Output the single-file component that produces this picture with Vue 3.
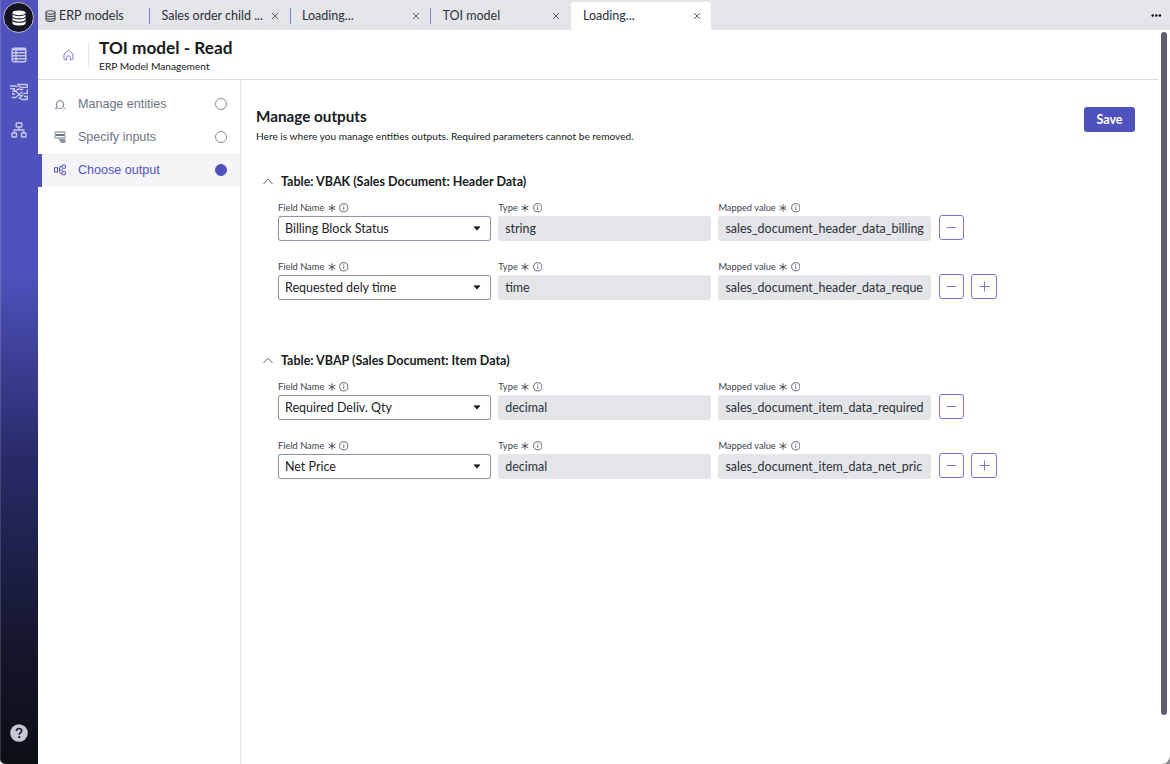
<template>
  <div class="app">
    <nav class="rail">
      <div class="rail-logo">
        <svg width="16" height="18" viewBox="0 0 16 18">
          <path d="M1.5 3.8v10.4c0 1.3 2.9 2.3 6.5 2.3s6.5-1 6.5-2.3V3.8z" fill="#fff" />
          <ellipse cx="8" cy="3.8" rx="6.5" ry="2.4" fill="#fff" />
          <path d="M1.5 4.8c1.8 2.5 11.2 2.5 13 0M1.5 8c1.8 2.5 11.2 2.5 13 0M1.5 11.4c1.8 2.5 11.2 2.5 13 0" fill="none" stroke="#151423" stroke-width="1.1" />
        </svg>
      </div>
      <svg class="rail-icon table-icon" viewBox="0 0 16 16">
        <rect x="1.2" y="1.2" width="13.6" height="13.6" rx="1.5" />
        <path d="M1.5 2.7h13M5 3v11.5M1.5 5.7h13M1.5 8.7h13M1.5 11.7h13" />
      </svg>
      <svg class="rail-icon map-icon" viewBox="0 0 18 18">
        <path d="M0 3h5.500l1.500 1M0 5.700h5M2 8.300h3.500M2 11h3M7 1.500h10.300v2.800H11L8 2.800M3 5.700l8 7.300M5.500 8.300l3-2.300 2.500.5 2.300-.2M2 14.500h3.500l5-4 2-1.700M17.300 6.300v4h-4M17.300 12.500v4h-5l-3-1.500 4-3.500M14 13.500h3" />
      </svg>
      <svg class="rail-icon tree-icon" viewBox="0 0 16 16">
        <rect x="5.2" y="1" width="5.6" height="4" rx="0.5" />
        <rect x="1" y="11" width="4.5" height="4" rx="0.5" />
        <rect x="10.5" y="11" width="4.5" height="4" rx="0.5" />
        <path d="M8 5v3M3.200 11V8h9.600v3" />
      </svg>
      <div class="help">
        <svg width="18" height="18" viewBox="0 0 18 18">
          <circle cx="9" cy="9" r="8.8" fill="#c7c9d2" />
          <path d="M6.400 7c0-3.300 5.300-3.300 5.300-.3 0 2-2.500 2-2.500 4" fill="none" stroke="#171a32" stroke-width="1.6" />
          <circle cx="9.2" cy="13.2" r="1.1" fill="#171a32" />
        </svg>
      </div>
    </nav>

    <div class="workspace">
      <div class="tabs">
        <div class="tab home-tab">
          <svg width="11" height="12" viewBox="0 0 11 12" fill="none" stroke="#4a4d58" stroke-width="1.1">
            <ellipse cx="5.5" cy="2.4" rx="4.5" ry="1.7" />
            <path d="M1 2.400v7.200c0 2.300 9 2.300 9 0V2.400M1 4.800c0 2.300 9 2.300 9 0M1 7.200c0 2.300 9 2.300 9 0" />
          </svg>
          <span>ERP models</span>
        </div>
        <div v-for="tab in tabs" :key="tab.id" class="tab" :class="{ active: tab.id === activeTab }" @click="activeTab = tab.id">
          <span>{{ tab.title }}</span>
          <svg class="close" viewBox="0 0 8 8"><path d="M1 1l6 6M7 1L1 7" /></svg>
        </div>
        <svg class="more" width="11" height="3" viewBox="0 0 11 3">
          <circle cx="1.7" cy="1.5" r="1.2" />
          <circle cx="5.3" cy="1.5" r="1.2" />
          <circle cx="8.9" cy="1.5" r="1.2" />
        </svg>
      </div>

      <header class="page-header">
        <svg class="home" viewBox="0 0 11 12">
          <path d="M1 5.200L5.500 1 10 5.200v4.600q0 1-1 1H7.300V8.500a1.800 1.800 0 0 0-3.600 0v2.300H2q-1 0-1-1z" />
        </svg>
        <div class="titles">
          <h1>TOI model - Read</h1>
          <p>ERP Model Management</p>
        </div>
      </header>

      <div class="body">
        <aside class="steps">
          <div v-for="step in steps" :key="step.icon" class="step" :class="{ current: step.icon === currentStep }" @click="currentStep = step.icon">
            <svg class="step-icon" viewBox="0 0 12 12">
              <template v-if="step.icon === 'entities'">
                <path d="M3 8.500A3.700 3.700 0 1 1 9 8.500M.8 10.300H3V8.300M4.500 10.300h3M9 8.300v2M10.300 10.300h1.300" />
              </template>
              <template v-else-if="step.icon === 'inputs'">
                <rect x="0.8" y="1" width="10.4" height="2.5" rx="0.8" />
                <rect x="0.8" y="4.5" width="10.4" height="2.5" rx="0.8" />
                <path d="M5 9h6.500M6.500 11h5" stroke-width="1.4" />
              </template>
              <template v-else>
                <rect x="0.5" y="3.7" width="3" height="4.3" />
                <rect x="8.2" y="1" width="3.2" height="3.3" rx="0.5" />
                <rect x="8.2" y="7.5" width="3.2" height="3.3" rx="0.5" />
                <path d="M8 2.500H7Q5.500 2.500 5.500 4v3.800q0 1.500 1.500 1.500h1M5.500 6h3.500" />
              </template>
            </svg>
            <span>{{ step.label }}</span>
            <i class="dot"></i>
          </div>
        </aside>

        <main class="content">
          <div class="intro">
            <div>
              <h2>Manage outputs</h2>
              <p>Here is where you manage entities outputs. Required parameters cannot be removed.</p>
            </div>
            <button class="save">Save</button>
          </div>

          <section v-for="table in tables" :key="table.title" class="table-group">
            <h3>
              <svg width="10" height="7" viewBox="0 0 10 7"><path d="M.5 6L5 1.200 9.500 6" /></svg>
              <span>{{ table.title }}</span>
            </h3>
            <div v-for="(row, i) in table.rows" :key="row.name" class="row">
              <div v-for="col in columns" :key="col.key" class="field">
                <label>
                  <span>{{ col.label }}</span>
                  <svg class="required" viewBox="0 0 8 8"><path d="M4 .3v7.400M.6 2.200l6.800 3.600M7.400 2.200L.6 5.800" /></svg>
                  <svg class="info" viewBox="0 0 9 9">
                    <circle cx="4.5" cy="4.5" r="3.9" />
                    <path d="M4.500 4v2.600M4.500 2.200v1" />
                  </svg>
                </label>
                <div class="control" :class="{ select: col.key === 'name' }">
                  <span>{{ row[col.key] }}</span>
                  <svg v-if="col.key === 'name'" width="8" height="5" viewBox="0 0 8 5"><path d="M1 .7h6L4 4.300z" fill="#161b1c" stroke="#161b1c" stroke-width=".6" stroke-linejoin="round" /></svg>
                </div>
              </div>
              <div class="actions">
                <button>
                  <svg viewBox="0 0 11 11"><path d="M.8 5.500h9.400" /></svg>
                </button>
                <button v-if="i === table.rows.length - 1">
                  <svg viewBox="0 0 11 11"><path d="M.5 5.500h10M5.500.5v10" /></svg>
                </button>
              </div>
            </div>
          </section>
        </main>
      </div>
      <div class="scrollbar"></div>
      <svg class="corner" width="8" height="8" viewBox="0 0 8 8"><path d="M8 0v8H0Q7 7 8 0z" fill="#8b8c8f" /></svg>
    </div>
  </div>
</template>

<script setup>
import { ref } from "vue";

const activeTab = ref(4);
const currentStep = ref("output");

const tabs = [
  { id: 1, title: "Sales order child ..." },
  { id: 2, title: "Loading..." },
  { id: 3, title: "TOI model" },
  { id: 4, title: "Loading..." },
];

const steps = [
  { icon: "entities", label: "Manage entities" },
  { icon: "inputs", label: "Specify inputs" },
  { icon: "output", label: "Choose output" },
];

const columns = [
  { key: "name", label: "Field Name" },
  { key: "type", label: "Type" },
  { key: "mapped", label: "Mapped value" },
];

const tables = [
  {
    title: "Table: VBAK (Sales Document: Header Data)",
    rows: [
      { name: "Billing Block Status", type: "string", mapped: "sales_document_header_data_billing" },
      { name: "Requested dely time", type: "time", mapped: "sales_document_header_data_reque" },
    ],
  },
  {
    title: "Table: VBAP (Sales Document: Item Data)",
    rows: [
      { name: "Required Deliv. Qty", type: "decimal", mapped: "sales_document_item_data_required" },
      { name: "Net Price", type: "decimal", mapped: "sales_document_item_data_net_pric" },
    ],
  },
];
</script>

<style>
body {
  margin: 0;
  overflow: hidden;
}
</style>

<style scoped>
* {
  box-sizing: border-box;
}
h1,
h2,
h3,
p {
  margin: 0;
  white-space: nowrap;
}
svg {
  display: block;
  flex: none;
}
.app {
  display: flex;
  height: 764px;
  font-family: Lato, sans-serif;
  color: #161b1c;
  background: #fff;
}
.rail {
  flex: none;
  width: 38px;
  display: flex;
  flex-direction: column;
  align-items: center;
  padding: 2px 1px 0 0;
  border-bottom-left-radius: 5px;
  background: linear-gradient(#4f52bd 0, #4f52bd 270px, #282a68 460px, #15172f 640px, #0c0f14 764px);
  box-shadow: inset 1px 0 rgba(255, 255, 255, 0.15);
}
.rail-logo {
  width: 31px;
  height: 31px;
  border-radius: 50%;
  border: 1px solid #b9b9c8;
  background: #151423;
  display: flex;
  align-items: center;
  justify-content: center;
}
.rail-icon {
  width: 16px;
  height: 16px;
  fill: none;
  stroke: #c7c9e8;
  stroke-width: 1.4;
}
.table-icon {
  margin-top: 14px;
}
.map-icon {
  width: 18px;
  height: 18px;
  margin-top: 20px;
  stroke-width: 1.3;
}
.tree-icon {
  margin-top: 21px;
}
.help {
  margin-top: auto;
  margin-bottom: 22px;
}
.workspace {
  position: relative;
  flex: 1;
  min-width: 0;
  display: flex;
  flex-direction: column;
}
.tabs {
  flex: none;
  height: 30px;
  padding-top: 2px;
  display: flex;
  background: #e4e5e9;
  font-size: 12.5px;
}
.tab {
  position: relative;
  width: 140.5px;
  padding: 0 10.5px 1px 12.5px;
  display: flex;
  align-items: center;
  justify-content: space-between;
  white-space: nowrap;
  color: #2c3038;
  cursor: pointer;
}
.tab::before {
  content: "";
  position: absolute;
  left: 0;
  top: 6px;
  width: 1px;
  height: 16px;
  background: #7d80d4;
}
.home-tab {
  width: 111px;
  padding: 0 0 1px 6.5px;
  justify-content: flex-start;
  gap: 3.5px;
}
.home-tab::before,
.active::before {
  display: none;
}
.active {
  background: #fff;
  border-radius: 3px 3px 0 0;
}
.close {
  width: 8px;
  height: 8px;
  fill: none;
  stroke: #555a66;
  stroke-width: 1;
}
.more {
  margin: 12px 8.5px 0 auto;
}
.page-header {
  flex: none;
  height: 50px;
  width: 1120px;
  display: flex;
  align-items: flex-start;
  border-bottom: 1px solid #dadde2;
}
.home {
  width: 11px;
  height: 12px;
  margin: 19px 14px 0 25px;
  fill: none;
  stroke: #7477d2;
  stroke-width: 1;
}
.titles {
  margin-top: 7px;
  padding-left: 11px;
  position: relative;
}
.titles::before {
  content: "";
  position: absolute;
  left: 0;
  top: 5px;
  width: 1px;
  height: 25px;
  background: #e4e5e9;
}
h1 {
  font-size: 17.2px;
  line-height: 22px;
}
.titles p {
  font-size: 10.2px;
  line-height: 14px;
}
.body {
  flex: 1;
  display: flex;
}
.steps {
  flex: none;
  width: 203px;
  padding-top: 7.5px;
  border-right: 1.5px solid #dfe1e6;
}
.step {
  height: 33px;
  display: flex;
  align-items: center;
  padding: 0 13px 0 15.5px;
  font-family: "Liberation Sans", Arial, sans-serif;
  font-size: 12.55px;
  color: #6d7484;
  cursor: pointer;
}
.step span {
  margin-left: 12.5px;
}
.step-icon {
  width: 12px;
  height: 12px;
  fill: none;
  stroke: currentColor;
  stroke-width: 1;
}
.dot {
  width: 12px;
  height: 12px;
  margin-left: auto;
  border: 1px solid #858b98;
  border-radius: 50%;
}
.current {
  color: #4f52bd;
  background: #f5f5f8;
  box-shadow: inset 4px 0 #4f52bd;
}
.current .dot {
  background: #4f52bd;
  border-color: #4f52bd;
}
.content {
  flex: 1;
  padding: 27px 35px 0 15px;
}
.intro {
  display: flex;
  justify-content: space-between;
  height: 64px;
}
h2 {
  font-size: 15.25px;
  line-height: 19px;
}
.intro p {
  font-size: 10.13px;
  line-height: 15px;
  margin-top: 3px;
}
.save {
  width: 51px;
  height: 25px;
  padding: 0;
  border: none;
  border-radius: 3px;
  background: #4f52bd;
  color: #fff;
  font: bold 12.5px Lato, sans-serif;
}
.table-group {
  height: 179px;
  padding-left: 22px;
}
h3 {
  display: flex;
  align-items: center;
  gap: 8px;
  height: 20px;
  margin: 0 0 11.5px -15px;
  font-size: 12.5px;
}
h3 svg {
  fill: none;
  stroke: #60646e;
  stroke-width: 1;
}
.row {
  display: flex;
  gap: 7.7px;
  height: 59.2px;
}
.field {
  width: 212.5px;
}
label {
  display: flex;
  align-items: center;
  height: 10.5px;
  margin-bottom: 3px;
  font-size: 9.3px;
  color: #3c414c;
}
.required {
  width: 8px;
  height: 8px;
  margin: 0 3.5px 0 3.5px;
  fill: none;
  stroke: #3c414c;
  stroke-width: 0.9;
}
.info {
  width: 9.5px;
  height: 9.5px;
  fill: none;
  stroke: #4b505c;
  stroke-width: 0.8;
}
.control {
  height: 25px;
  display: flex;
  align-items: center;
  justify-content: space-between;
  padding: 0 7px;
  border-radius: 3px;
  background: #e4e5e9;
  color: #2c3038;
  font-size: 12.47px;
  white-space: nowrap;
}
.control span {
  overflow: hidden;
}
.select {
  padding: 0 8.5px 0 6px;
  border: 1px solid #8f95a3;
  background: #fff;
  color: #1d2126;
  box-shadow: 0 0 1px rgba(143, 149, 163, 0.6);
}
.actions {
  display: flex;
  gap: 7.3px;
  margin-top: 12.3px;
}
.actions button {
  width: 25.5px;
  height: 25.5px;
  padding: 0;
  display: flex;
  align-items: center;
  justify-content: center;
  border: 1px solid #7477d2;
  border-radius: 3px;
  background: #fff;
}
.actions svg {
  width: 11px;
  height: 11px;
  stroke: #7477d2;
  stroke-width: 1;
}
.scrollbar {
  position: absolute;
  right: 3px;
  top: 32px;
  width: 6px;
  height: 683px;
  border-radius: 3px;
  background: #5d5c70;
}
.corner {
  position: absolute;
  right: 0;
  bottom: 0;
}
</style>
